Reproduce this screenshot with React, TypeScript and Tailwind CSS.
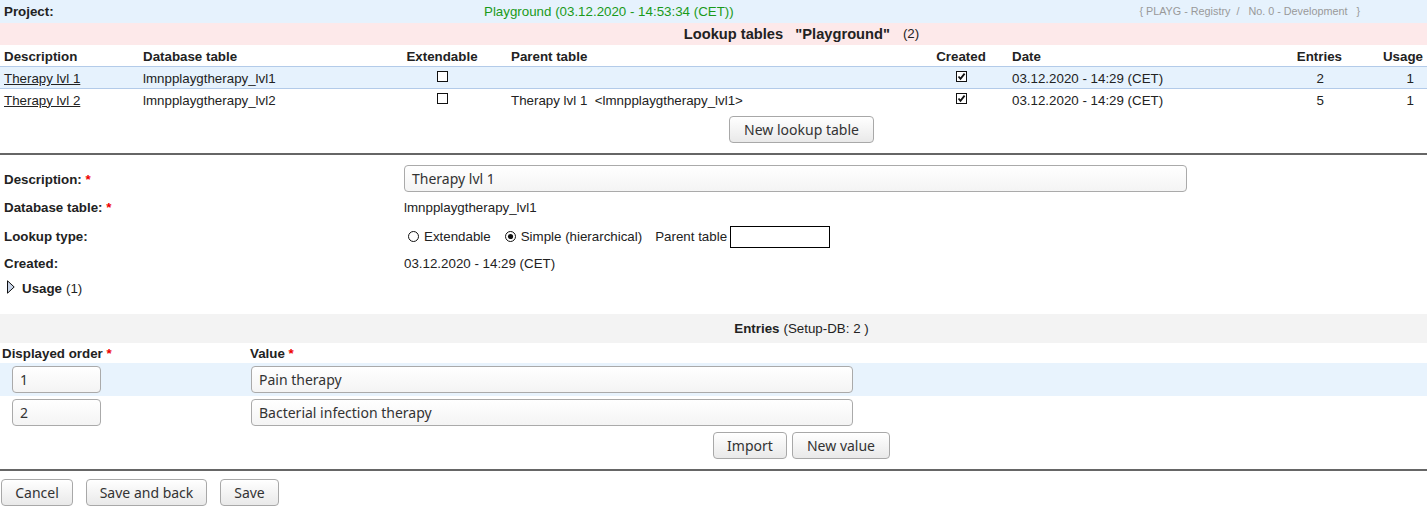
import React from "react";

const Check = ({ checked }: { checked?: boolean }) => (
  <svg width="11" height="11" viewBox="0 0 11 11" className="inline-block">
    <rect x="0.5" y="0.5" width="10" height="10" fill="white" stroke="#111" />
    {checked && <path d="M2.5 5.5 L4.5 7.8 L8.6 2.6" fill="none" stroke="#111" strokeWidth="1.8" />}
  </svg>
);

const Radio = ({ checked }: { checked?: boolean }) => (
  <svg width="11" height="11" viewBox="0 0 11 11" className="inline-block">
    <circle cx="5.5" cy="5.5" r="5" fill="white" stroke="#111" />
    {checked && <circle cx="5.5" cy="5.5" r="2.6" fill="#111" />}
  </svg>
);

const Req = () => <span className="text-[#e00]"> *</span>;

const Btn = ({ children, w }: { children: React.ReactNode; w: string }) => (
  <button
    className={`h-[27px] ${w} rounded-[4px] border border-[#a8a8a8] bg-gradient-to-b from-white to-[#e9e9e9] text-[14px] text-[#333] font-['Noto_Sans',sans-serif] leading-none shadow-[inset_0_1px_0_white]`}
  >
    {children}
  </button>
);

const Field = ({ value, w }: { value: string; w: string }) => (
  <div
    className={`h-[27px] ${w} rounded-[4px] border border-[#aaa] bg-gradient-to-b from-white to-[#f4f4f4] px-[7px] flex items-center text-[14px] text-[#333] font-['Noto_Sans',sans-serif]`}
  >
    {value}
  </div>
);

const cols = "grid grid-cols-[139px_237px_132px_404px_98px_240px_96px_1fr]";

export default function App() {
  const rows = [
    { d: "Therapy lvl 1", t: "lmnpplaygtherapy_lvl1", p: "", e: "2", blue: true },
    { d: "Therapy lvl 2", t: "lmnpplaygtherapy_lvl2", p: "Therapy lvl 1  <lmnpplaygtherapy_lvl1>", e: "5", blue: false },
  ];
  return (
    <div className="w-[1427px] h-[511px] bg-white text-[13.333px] text-[#222] font-['Liberation_Sans',Arial,sans-serif] overflow-hidden">
      {/* project bar */}
      <div className="h-[23px] bg-[#e6f2fd] flex items-center">
        <div className="w-[484px] pl-1 font-bold">Project:</div>
        <div className="flex-1 text-[#1a9a1a]">Playground (03.12.2020 - 14:53:34 (CET))</div>
        <div className="pr-[67px] text-[10.8px] text-[#999] whitespace-pre">{"{ PLAYG - Registry  /   No. 0 - Development   }"}</div>
      </div>
      {/* title bar */}
      <div className="h-[22px] bg-[#fde9ea] flex items-center justify-center pl-[176px]">
        <span className="font-bold text-[14.667px] whitespace-pre">{'Lookup tables   "Playground"'}</span>
        <span className="ml-[13px]">(2)</span>
      </div>
      {/* table header */}
      <div className={`${cols} h-[22px] items-center font-bold border-b border-[#b3cbe9] pt-[2px]`}>
        <div className="pl-1">Description</div>
        <div className="pl-1">Database table</div>
        <div className="text-center">Extendable</div>
        <div className="pl-[3px]">Parent table</div>
        <div className="text-center">Created</div>
        <div className="pl-[2px]">Date</div>
        <div className="text-right pr-1">Entries</div>
        <div className="text-right pr-1">Usage</div>
      </div>
      {rows.map((r) => (
        <div
          key={r.d}
          className={`${cols} h-[22px] items-center ${r.blue ? "bg-[#e6f2fd] border-b border-[#b3cbe9] pt-[2px]" : "pt-[1px]"}`}
        >
          <div className="pl-1 underline">{r.d}</div>
          <div className="pl-1">{r.t}</div>
          <div className="flex justify-center -mt-[4px]"><Check /></div>
          <div className="pl-[3px] whitespace-pre">{r.p}</div>
          <div className="flex justify-center -mt-[4px]"><Check checked /></div>
          <div className="pl-[2px]">03.12.2020 - 14:29 (CET)</div>
          <div className="text-right pr-[22px]">{r.e}</div>
          <div className="text-right pr-[13px]">1</div>
        </div>
      ))}
      <div className="flex justify-center pl-[176px] pt-[5px] h-[42px]">
        <Btn w="w-[145px]">New lookup table</Btn>
      </div>
      <div className="h-[2px] bg-[#666]" />

      {/* form */}
      <div className="pt-[10px]">
        <div className="flex items-center h-[27px]">
          <div className="w-[404px] pl-1 font-bold pt-[2px]">Description:<Req /></div>
          <Field value="Therapy lvl 1" w="w-[783px]" />
        </div>
        <div className="flex items-center h-[30px] mt-[1px]">
          <div className="w-[404px] pl-1 font-bold">Database table:<Req /></div>
          <div>lmnpplaygtherapy_lvl1</div>
        </div>
        <div className="flex items-center h-[27px] pt-[1px]">
          <div className="w-[404px] pl-1 font-bold">Lookup type:</div>
          <div className="flex items-center">
            <span className="ml-[4px] -mt-[2px] flex"><Radio /></span>
            <span className="ml-[5px]">Extendable</span>
            <span className="ml-[14px] -mt-[2px] flex"><Radio checked /></span>
            <span className="ml-[5px]">Simple (hierarchical)</span>
            <span className="ml-[13px]">Parent table</span>
            <span className="ml-[3px] w-[100px] h-[22px] border border-black" />
          </div>
        </div>
        <div className="flex items-center h-[28px]">
          <div className="w-[404px] pl-1 font-bold">Created:</div>
          <div>03.12.2020 - 14:29 (CET)</div>
        </div>
        <div className="flex items-center h-[20px] pt-[1px] pl-[7px]">
          <svg width="8" height="14" viewBox="0 0 8 14" className="-mt-[4px]">
            <path d="M0.5 0.8 L7.2 7 L0.5 13.2 Z" fill="#c9d5e8" stroke="#111" />
          </svg>
          <span className="ml-[7px] font-bold">Usage</span>
          <span className="ml-[4px]">(1)</span>
        </div>
      </div>

      {/* entries */}
      <div className="mt-[16px] h-[29px] bg-[#f3f3f3] flex items-center justify-center pl-[176px]">
        <span className="font-bold">Entries</span>
        <span className="ml-[4px]">(Setup-DB: 2 )</span>
      </div>
      <div className="flex items-center h-[20px] pt-[1px] font-bold">
        <div className="w-[250px] pl-[2px]">Displayed order<Req /></div>
        <div>Value<Req /></div>
      </div>
      {[
        { o: "1", v: "Pain therapy", blue: true },
        { o: "2", v: "Bacterial infection therapy", blue: false },
      ].map((e) => (
        <div key={e.o} className={`flex items-center h-[33px] ${e.blue ? "bg-[#e8f3fd]" : ""}`}>
          <div className="w-[251px] pl-[12px]">
            <Field value={e.o} w="w-[89px]" />
          </div>
          <Field value={e.v} w="w-[602px]" />
        </div>
      ))}
      <div className="flex justify-center pl-[176px] gap-[5px] pt-[3px] h-[40px]">
        <Btn w="w-[74px]">Import</Btn>
        <Btn w="w-[98px]">New value</Btn>
      </div>
      <div className="h-[2px] bg-[#666]" />
      <div className="flex pt-[8px] pl-[1px]">
        <Btn w="w-[72px]">Cancel</Btn>
        <span className="ml-[13px]"><Btn w="w-[121px]">Save and back</Btn></span>
        <span className="ml-[13px]"><Btn w="w-[59px]">Save</Btn></span>
      </div>
    </div>
  );
}
